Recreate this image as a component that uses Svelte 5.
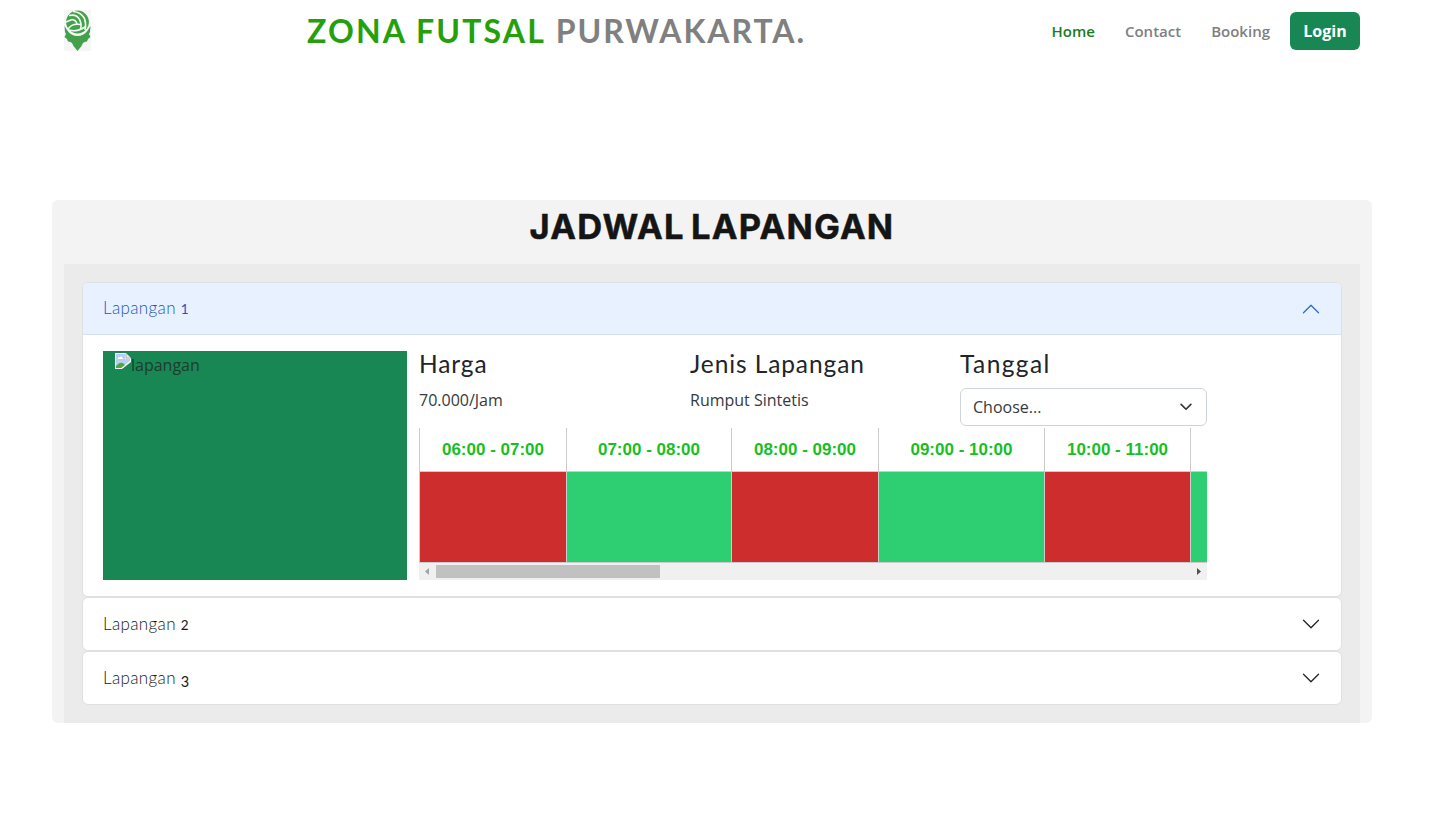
<script>
  const slots = [
    { time: '06:00 - 07:00', width: 147, booked: true },
    { time: '07:00 - 08:00', width: 165, booked: false },
    { time: '08:00 - 09:00', width: 147, booked: true },
    { time: '09:00 - 10:00', width: 166, booked: false },
    { time: '10:00 - 11:00', width: 146, booked: true },
    { time: '', width: 166, booked: false }
  ];
</script>

{#snippet chevron(color, up)}
  <svg class="chevron" class:up width="20" height="20" viewBox="0 0 16 16" fill={color}>
    <path fill-rule="evenodd" d="M1.646 4.646a.5.5 0 0 1 .708 0L8 10.293l5.646-5.647a.5.5 0 0 1 .708.708l-6 6a.5.5 0 0 1-.708 0l-6-6a.5.5 0 0 1 0-.708z" />
  </svg>
{/snippet}

<header>
  <svg class="logo" width="27" height="41" viewBox="0 0 27 41">
    <rect width="27" height="41" fill="#f5f6f5" />
    <path fill="#45a04b" d="M.5 16 L3 20 Q7 26 13.500 26 Q20 26 24 20 L26.500 16 L26 22 L25 24 L26.500 27 L24 29 L23 31.500 L20.500 32 L19 33 L17.500 36 L13.500 41 L9.500 36 L8 33 L6.500 32 L4 31.500 L3 29 L.5 27 L2 24 L1 22 Z" />
    <circle cx="13.500" cy="12.300" r="12.600" fill="#f5faf5" />
    <circle cx="13.500" cy="12" r="11.400" fill="#45a04b" />
    <g fill="none" stroke="#f4fbf4" stroke-width="1.600">
      <path d="M5 5.500 Q13 4 15.500 9.500 Q18 14 16.500 19" />
      <path d="M9 1.500 Q17 2 20.500 8.500 Q22.500 14 21 20" />
      <path d="M2 12 L8 9.500 Q12 10 13 14" />
      <path d="M4 19 Q8 13 16.500 14.500" />
      <path d="M5 20 Q12 22.500 21 17" />
    </g>
  </svg>
  <h1><span>ZONA FUTSAL</span> PURWAKARTA.</h1>
  <nav>
    <a class="active" href="#home">Home</a>
    <a href="#contact">Contact</a>
    <a href="#booking">Booking</a>
    <button class="login">Login</button>
  </nav>
</header>

<main>
  <h2>JADWAL LAPANGAN</h2>
  <div class="inner">
    <section class="item">
      <button class="toggle open"><span>Lapangan <span class="num">1</span></span>{@render chevron('#2f6bcb', true)}</button>
      <div class="body">
        <div class="photo">
          <svg width="16" height="16" viewBox="0 0 16 16">
            <path d="M0 0H11L16 5V9L7 16H0Z" fill="#f5f7f6" />
            <path d="M1 1H10V6H15V8L6 15H1Z" fill="#b9cff2" />
            <path d="M2.500 6Q3 4 5 4Q7 2.500 8 6Z" fill="#fff" />
            <path d="M1 15V13Q6 7 10 12L6 15Z" fill="#4fa83d" />
            <path d="M11 0V5H16Z" fill="#e6ebf0" stroke="#8b9da5" stroke-width=".7" />
          </svg><span>lapangan</span>
        </div>
        <div class="details">
          <div class="facts">
            <div><h3>Harga</h3><p>70.000/Jam</p></div>
            <div><h3>Jenis Lapangan</h3><p>Rumput Sintetis</p></div>
            <div>
              <h3 class="tanggal">Tanggal</h3>
              <div class="select">
                <span>Choose...</span>
                <svg width="16" height="12" viewBox="0 0 16 16"><path fill="none" stroke="#343a40" stroke-linecap="round" stroke-linejoin="round" stroke-width="2.300" d="m1.500 4.500 6.500 6.500 6.500-6.500" /></svg>
              </div>
            </div>
          </div>
          <div class="schedule">
            {#each slots as slot}
              <div class="slot" style="width: {slot.width}px">
                <div class="time">{slot.time}</div>
                <div class="status" class:booked={slot.booked}></div>
              </div>
            {/each}
          </div>
          <div class="scrollbar">
            <svg width="17" height="17" viewBox="0 0 17 17"><path d="M10 5V12L6 8.500Z" fill="#a3a3a3" /></svg>
            <div class="thumb"></div>
            <svg width="17" height="17" viewBox="0 0 17 17"><path d="M7 5V12L11 8.500Z" fill="#505050" /></svg>
          </div>
        </div>
      </div>
    </section>
    <section class="item">
      <button class="toggle"><span>Lapangan <span class="num">2</span></span>{@render chevron('#212529', false)}</button>
    </section>
    <section class="item">
      <button class="toggle"><span>Lapangan <span class="num low">3</span></span>{@render chevron('#212529', false)}</button>
    </section>
  </div>
</main>

<style>
  :global(body) { margin: 0; background: #fff; }
  :global(#app) { font-family: 'Open Sans', sans-serif; font-size: 16px; line-height: 24px; color: #212529; }
  header, main, header *, main * { box-sizing: border-box; }
  h1, h2, h3, p { margin: 0; }
  button { font: inherit; border: 0; }
  header { display: flex; align-items: center; height: 62px; width: 1320px; margin-left: 52px; padding: 0 12px; }
  .logo { display: block; margin-top: -1px; }
  h1 { margin-left: 216px; width: 520px; font: 700 32px/40px Lato, sans-serif; letter-spacing: 1.950px; color: #808080; white-space: nowrap; }
  h1 span { color: #25a00b; letter-spacing: 2.150px; }
  nav { display: flex; align-items: center; margin-left: auto; }
  nav a { font-size: 15px; font-weight: 600; color: #808080; text-decoration: none; margin-right: 30px; }
  nav a:nth-child(3) { margin-right: 20px; }
  nav a.active { color: #1b7a1f; }
  .login { width: 70px; height: 38px; padding: 0; border-radius: 6px; background: #198754; color: #fff; font-weight: 700; }
  main { width: 1320px; height: 523px; margin: 138px 0 0 52px; padding: 0 12px; border-radius: 6px; background: #f3f3f3; }
  h2 { height: 64px; font: 700 34.500px/54px Inter, sans-serif; letter-spacing: 1.200px; word-spacing: -3px; text-align: center; color: #151515; -webkit-text-stroke: .5px #151515; }
  .inner { padding: 18px; background: #ebebeb; }
  .item { border: 1px solid #dfe0e1; border-radius: 6px; background: #fff; overflow: hidden; }
  .toggle { display: flex; align-items: center; justify-content: space-between; width: 100%; height: 52px; padding: 0 20px; background: #fff; font: 300 17px/24px Lato, sans-serif; color: #16191c; letter-spacing: .35px; }
  .toggle.open { background: #e7f1ff; color: #1d55bd; box-shadow: inset 0 -1px #d5dfed; padding-bottom: 2px; }
  .toggle.open .chevron { position: relative; top: 1px; }
  .num { display: inline-block; font-size: 13.500px; line-height: 16px; font-weight: 400; }
  .num.low { position: relative; top: 3px; font-size: 14.500px; }
  .up { transform: rotate(180deg); }
  .body { display: flex; gap: 12px; padding: 16px 20px; }
  .photo { display: flex; width: 304px; height: 229px; padding: 2px 12px; background: #198754; color: #1b3d30; }
  .photo svg { flex: none; }
  .details { width: 788px; }
  .facts { display: grid; grid-template-columns: 271px 270px 247px; height: 77px; }
  .facts p, .select span { color: #35393d; }
  h3 { height: 37px; font: 400 24.500px/26px Lato, sans-serif; letter-spacing: .9px; white-space: nowrap; }
  .tanggal { letter-spacing: 1.400px; }
  .select { display: flex; align-items: center; justify-content: space-between; height: 38px; padding: 0 12px; border: 1px solid #ced4da; border-radius: 6px; }
  .schedule { display: flex; height: 135px; overflow: hidden; }
  .slot { flex: none; border-left: 1px solid #ccc; }
  .time { height: 44px; border-bottom: 1px solid #ccc; font: 700 17px/43px 'Liberation Sans', sans-serif; text-align: center; color: #17bf25; }
  .status { height: 91px; background: #2ecf72; border-bottom: 1px solid #ccc; }
  .status.booked { background: #cd2d2d; }
  .scrollbar { display: flex; align-items: center; height: 17px; background: #f0f0f0; }
  .scrollbar svg:last-child { margin-left: auto; }
  .thumb { width: 224px; height: 13px; background: #c1c1c1; }
</style>
